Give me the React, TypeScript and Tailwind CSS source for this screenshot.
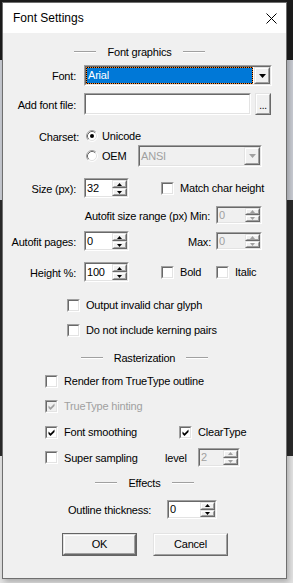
import React from 'react';

const font = "font-['Liberation_Sans',Arial,sans-serif] text-[11px] tracking-[-0.2px] leading-[13px]";

interface BoxProps {
  className?: string;
  inner?: string;
  children?: React.ReactNode;
}

// classic sunken field (textbox, combo, checkbox)
const Sunken: React.FC<BoxProps> = ({ className = '', inner = 'bg-white', children }) => (
  <div className={`border border-t-[#a0a0a0] border-l-[#a0a0a0] border-r-white border-b-white ${className}`}>
    <div className={`h-full w-full border border-t-[#696969] border-l-[#696969] border-r-[#e3e3e3] border-b-[#e3e3e3] ${inner}`}>
      {children}
    </div>
  </div>
);

// classic raised button face
const Raised: React.FC<BoxProps> = ({ className = '', inner = '', children }) => (
  <div className={`border border-t-[#e3e3e3] border-l-[#e3e3e3] border-r-[#696969] border-b-[#696969] bg-[#f0f0f0] ${className}`}>
    <div className={`h-full w-full border border-t-white border-l-white border-r-[#a0a0a0] border-b-[#a0a0a0] flex items-center justify-center ${inner}`}>
      {children}
    </div>
  </div>
);

const Arrow: React.FC<{ up?: boolean; big?: boolean; disabled?: boolean }> = ({ up, big, disabled }) => {
  const color = disabled ? '#a0a0a0' : '#000';
  if (big) {
    return (
      <svg width="7" height="4" viewBox="0 0 7 4">
        <polygon points="0,0 7,0 3.5,4" fill={color} />
      </svg>
    );
  }
  return (
    <svg width="5" height="3" viewBox="0 0 5 3">
      <polygon points={up ? '0,3 5,3 2.5,0' : '0,0 5,0 2.5,3'} fill={color} />
    </svg>
  );
};

const Spin: React.FC<{ value: string; className: string; disabled?: boolean }> = ({ value, className, disabled }) => (
  <Sunken className={className} inner={disabled ? 'bg-[#f0f0f0]' : 'bg-white'}>
    <div className="flex h-full">
      <span className={`flex-1 pl-[1px] flex items-center ${disabled ? 'text-[#a0a0a0]' : 'text-black'}`}>{value}</span>
      <div className="flex flex-col w-[15px]">
        <Raised className="flex-1"><Arrow up disabled={disabled} /></Raised>
        <Raised className="flex-1"><Arrow disabled={disabled} /></Raised>
      </div>
    </div>
  </Sunken>
);

const CheckBox: React.FC<{ checked?: boolean; disabled?: boolean; label: string; className?: string }> = ({ checked, disabled, label, className = '' }) => (
  <div className={`flex items-center ${className}`}>
    <Sunken className="w-[13px] h-[13px] shrink-0" inner={disabled ? 'bg-[#f0f0f0]' : 'bg-white'}>
      {checked && (
        <svg width="9" height="9" viewBox="0 0 9 9" className="block">
          <path d="M1.5 3.5 L3.5 5.5 L7.5 1.5 L7.5 4 L3.5 8 L1.5 6 Z" fill={disabled ? '#a0a0a0' : '#000'} />
        </svg>
      )}
    </Sunken>
    <span className={`ml-[6px] pt-[1px] whitespace-nowrap ${disabled ? 'text-[#a0a0a0]' : 'text-black'}`}>{label}</span>
  </div>
);

const Radio: React.FC<{ checked?: boolean }> = ({ checked }) => (
  <svg width="12" height="12" viewBox="0 0 12 12" className="shrink-0">
    <circle cx="6" cy="6" r="5" fill="#fff" />
    <path d="M2.11 9.89 A5.5 5.5 0 0 1 9.89 2.11" fill="none" stroke="#a0a0a0" />
    <path d="M9.89 2.11 A5.5 5.5 0 0 1 2.11 9.89" fill="none" stroke="#fff" />
    <path d="M2.82 9.18 A4.5 4.5 0 0 1 9.18 2.82" fill="none" stroke="#696969" />
    <path d="M9.18 2.82 A4.5 4.5 0 0 1 2.82 9.18" fill="none" stroke="#e3e3e3" />
    {checked && <circle cx="6" cy="6" r="2" fill="#000" />}
  </svg>
);

const Heading: React.FC<{ text: string; className?: string }> = ({ text, className = '' }) => (
  <div className={`flex items-center justify-center gap-[11px] h-[14px] ${className}`}>
    <div className="w-[22px] h-[2px] border-t border-t-[#a0a0a0] border-b border-b-white" />
    <span className="text-black">{text}</span>
    <div className="w-[22px] h-[2px] border-t border-t-[#a0a0a0] border-b border-b-white" />
  </div>
);

const Label: React.FC<{ text: string; className?: string }> = ({ text, className = 'w-[73px]' }) => (
  <span className={`text-right pt-[2px] whitespace-nowrap text-black shrink-0 ${className}`}>{text}</span>
);

export default function App() {
  return (
    <div className="w-[293px] h-[583px] overflow-hidden pt-[2px] pl-[2px] bg-[linear-gradient(to_bottom,#1c1c1c_0,#1c1c1c_60px,#c9ccd3_60px,#c9ccd3_200px,#2b2b2b_200px,#2b2b2b_456px,#e4e4e4_456px)]">
      <div className={`w-[285px] h-[577px] border border-[#6f6f6f] bg-[#f0f0f0] flex flex-col shadow-[2px_3px_6px_rgba(0,0,0,0.25)] ${font}`}>
        {/* title bar */}
        <div className="h-[30px] bg-white flex items-center justify-between pl-[10px] pr-[8px]">
          <span className="text-[12px] tracking-normal text-black">Font Settings</span>
          <svg width="11" height="11" viewBox="0 0 11 11" className="mr-[1px]">
            <path d="M0.5 0.5 L10.5 10.5 M10.5 0.5 L0.5 10.5" stroke="#000" strokeWidth="1" />
          </svg>
        </div>

        <div className="flex flex-col">
          <Heading text="Font graphics" className="mt-[12px] pr-[10px]" />

          <div className="mt-[6px] h-[21px] flex items-center">
            <Label text="Font:" />
            <Sunken className="ml-[8px] w-[188px] h-full">
              <div className="flex h-full">
                <div className="flex-1 bg-black mr-[1px]">
                  <div className="h-full border border-dotted border-[#ff8728] bg-[#0078d7] bg-clip-padding text-white flex items-center pl-[1px]">Arial</div>
                </div>
                <Raised className="w-[16px] h-full"><Arrow big /></Raised>
              </div>
            </Sunken>
          </div>

          <div className="mt-[7px] h-[22px] flex items-center">
            <Label text="Add font file:" />
            <Sunken className="ml-[8px] w-[167px] h-full" />
            <Raised className="ml-[4px] w-[16px] h-full" inner="items-end pb-[3px]">
              <span className="text-[10px] leading-[8px]">...</span>
            </Raised>
          </div>

          <div className="mt-[13px] h-[16px] flex items-center">
            <Label text="Charset:" className="w-[76px]" />
            <div className="ml-[7px] flex items-center">
              <Radio checked />
              <span className="ml-[4px] pt-[1px] text-black">Unicode</span>
            </div>
          </div>

          <div className="mt-[1px] h-[22px] flex items-center pl-[83px]">
            <Radio />
            <span className="ml-[4px] pt-[1px] w-[36px] text-black">OEM</span>
            <Sunken className="w-[124px] h-full" inner="bg-[#f0f0f0]">
              <div className="flex h-full">
                <span className="flex-1 flex items-center pl-[1px] text-[#a0a0a0]">ANSI</span>
                <Raised className="w-[16px] h-full"><Arrow big disabled /></Raised>
              </div>
            </Sunken>
          </div>

          <div className="mt-[11px] h-[20px] flex items-center">
            <Label text="Size (px):" />
            <Spin value="32" className="ml-[8px] w-[45px] h-full" />
            <CheckBox label="Match char height" className="ml-[32px]" />
          </div>

          <div className="mt-[8px] h-[18px] flex items-center">
            <Label text="Autofit size range (px) Min:" className="w-[213px] pr-[6px]" />
            <Spin value="0" className="w-[46px] h-full" disabled />
          </div>

          <div className="mt-[7px] h-[20px] flex items-center">
            <Label text="Autofit pages:" />
            <Spin value="0" className="ml-[8px] w-[45px] h-full" />
            <Label text="Max:" className="w-[87px] pr-[5px]" />
            <Spin value="0" className="w-[46px] h-[18px]" disabled />
          </div>

          <div className="mt-[11px] h-[20px] flex items-center">
            <Label text="Height %:" />
            <Spin value="100" className="ml-[8px] w-[45px] h-full" />
            <CheckBox label="Bold" className="ml-[32px] w-[55px]" />
            <CheckBox label="Italic" className="ml-0" />
          </div>

          <div className="mt-[15px] h-[16px] flex items-center pl-[64px]">
            <CheckBox label="Output invalid char glyph" />
          </div>
          <div className="mt-[9px] h-[16px] flex items-center pl-[64px]">
            <CheckBox label="Do not include kerning pairs" />
          </div>

          <Heading text="Rasterization" className="mt-[13px]" />

          <div className="mt-[8px] h-[16px] flex items-center pl-[42px]">
            <CheckBox label="Render from TrueType outline" />
          </div>
          <div className="mt-[9px] h-[16px] flex items-center pl-[42px]">
            <CheckBox label="TrueType hinting" checked disabled />
          </div>
          <div className="mt-[10px] h-[16px] flex items-center pl-[42px]">
            <CheckBox label="Font smoothing" checked className="w-[134px]" />
            <CheckBox label="ClearType" checked />
          </div>
          <div className="mt-[8px] h-[19px] flex items-center pl-[42px]">
            <CheckBox label="Super sampling" className="w-[120px]" />
            <span className="w-[33px] pt-[2px] text-black">level</span>
            <Spin value="2" className="w-[42px] h-full" disabled />
          </div>

          <Heading text="Effects" className="mt-[9px]" />

          <div className="mt-[10px] h-[19px] flex items-center pl-[65px]">
            <span className="w-[99px] pt-[2px] text-black">Outline thickness:</span>
            <Spin value="0" className="w-[50px] h-full" />
          </div>

          <div className="mt-[14px] h-[23px] flex items-center pl-[59px]">
            <div className="w-[75px] h-full border border-[#646464]">
              <Raised className="h-full" inner="text-black">OK</Raised>
            </div>
            <Raised className="ml-[16px] w-[75px] h-full" inner="text-black">Cancel</Raised>
          </div>
        </div>
      </div>
    </div>
  );
}
